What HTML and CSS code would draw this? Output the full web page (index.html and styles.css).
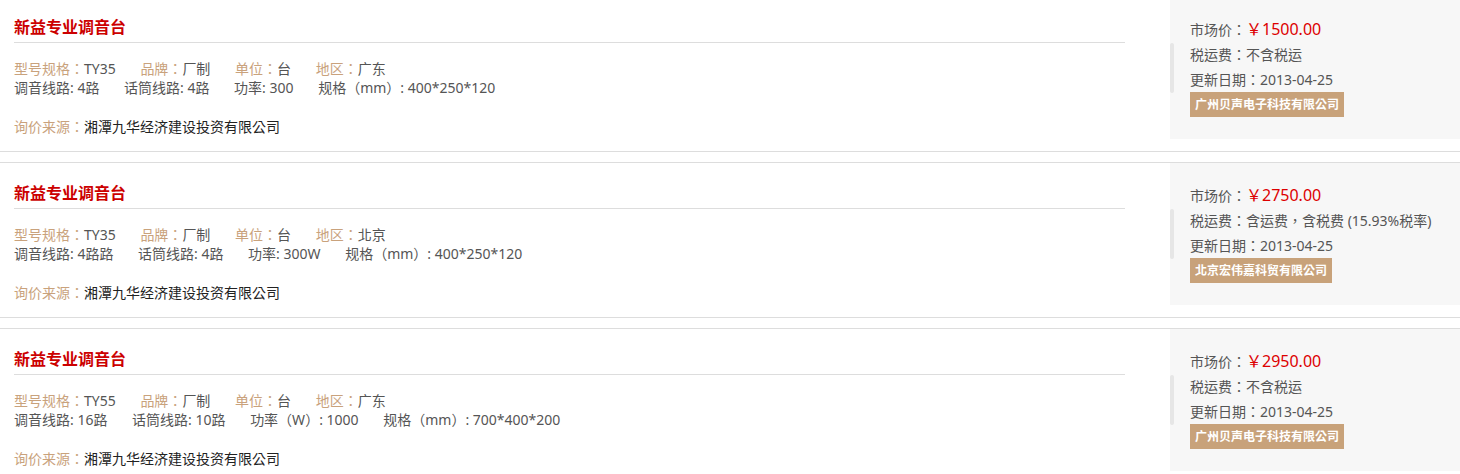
FILE: index.html
```html
<!DOCTYPE html>
<html>
<head>
  <meta charset="utf-8">
  <title>调音台询价</title>
  <link rel="stylesheet" href="styles.css">
</head>
<body>
  <div class="list">
    <div class="item">
      <div class="info">
        <h3 class="title">新益专业调音台</h3>
        <div class="row">
          <span class="field"><em>型号规格：</em>TY35</span>
          <span class="field"><em>品牌：</em>厂制</span>
          <span class="field"><em>单位：</em>台</span>
          <span class="field"><em>地区：</em>广东</span>
        </div>
        <div class="row">
          <span class="field">调音线路: 4路</span>
          <span class="field">话筒线路: 4路</span>
          <span class="field">功率: 300</span>
          <span class="field">规格（mm）: 400*250*120</span>
        </div>
        <div class="row source"><em>询价来源：</em><span>湘潭九华经济建设投资有限公司</span></div>
      </div>
      <div class="side">
        <div class="bar"></div>
        <div class="price-box">
          <p>市场价：<span class="price">￥1500.00</span></p>
          <p>税运费：不含税运</p>
          <p>更新日期：2013-04-25</p>
          <span class="supplier">广州贝声电子科技有限公司</span>
        </div>
      </div>
    </div>

    <div class="item">
      <div class="info">
        <h3 class="title">新益专业调音台</h3>
        <div class="row">
          <span class="field"><em>型号规格：</em>TY35</span>
          <span class="field"><em>品牌：</em>厂制</span>
          <span class="field"><em>单位：</em>台</span>
          <span class="field"><em>地区：</em>北京</span>
        </div>
        <div class="row">
          <span class="field">调音线路: 4路路</span>
          <span class="field">话筒线路: 4路</span>
          <span class="field">功率: 300W</span>
          <span class="field">规格（mm）: 400*250*120</span>
        </div>
        <div class="row source"><em>询价来源：</em><span>湘潭九华经济建设投资有限公司</span></div>
      </div>
      <div class="side">
        <div class="bar"></div>
        <div class="price-box">
          <p>市场价：<span class="price">￥2750.00</span></p>
          <p>税运费：含运费，含税费 (15.93%税率)</p>
          <p>更新日期：2013-04-25</p>
          <span class="supplier">北京宏伟嘉科贸有限公司</span>
        </div>
      </div>
    </div>

    <div class="item">
      <div class="info">
        <h3 class="title">新益专业调音台</h3>
        <div class="row">
          <span class="field"><em>型号规格：</em>TY55</span>
          <span class="field"><em>品牌：</em>厂制</span>
          <span class="field"><em>单位：</em>台</span>
          <span class="field"><em>地区：</em>广东</span>
        </div>
        <div class="row">
          <span class="field">调音线路: 16路</span>
          <span class="field">话筒线路: 10路</span>
          <span class="field">功率（W）: 1000</span>
          <span class="field">规格（mm）: 700*400*200</span>
        </div>
        <div class="row source"><em>询价来源：</em><span>湘潭九华经济建设投资有限公司</span></div>
      </div>
      <div class="side">
        <div class="bar"></div>
        <div class="price-box">
          <p>市场价：<span class="price">￥2950.00</span></p>
          <p>税运费：不含税运</p>
          <p>更新日期：2013-04-25</p>
          <span class="supplier">广州贝声电子科技有限公司</span>
        </div>
      </div>
    </div>
  </div>
</body>
</html>
```

FILE: styles.css
```css
body {
  margin: 0;
  font-family: "Noto Sans", "Noto Sans CJK TC", sans-serif;
  font-size: 14px;
  color: #555;
  background: #fff;
}
.list {
  margin-top: -4px;
}
.item {
  display: flex;
  height: 154px;
  border-top: 1px solid #ddd;
  border-bottom: 1px solid #ddd;
  margin-bottom: 10px;
}
.info {
  flex: 1;
  padding: 0 45px 0 14px;
}
.title {
  margin: 0 0 16px;
  padding: 18px 0 3px;
  line-height: 24px;
  font-size: 16px;
  font-weight: bold;
  color: #c00;
  border-bottom: 1px solid #ddd;
}
.row {
  line-height: 19px;
  white-space: nowrap;
}
.row em {
  font-style: normal;
  color: #c9a27c;
}
.field {
  margin-right: 21px;
}
.source {
  margin-top: 20px;
}
.source span {
  color: #222;
}
.side {
  width: 290px;
  height: 142px;
  background: #f7f7f7;
  display: flex;
}
.bar {
  align-self: center;
  width: 4px;
  height: 50px;
  background: #e6e6e6;
  border-radius: 2px;
}
.price-box {
  padding: 20px 0 0 16px;
}
.price-box p {
  margin: 0;
  line-height: 25px;
}
.price {
  font-size: 16px;
  color: #d00;
}
.supplier {
  display: inline-block;
  padding: 0 5px;
  line-height: 25px;
  font-size: 12px;
  font-weight: bold;
  color: #fff;
  background: #c8a27a;
}
```
